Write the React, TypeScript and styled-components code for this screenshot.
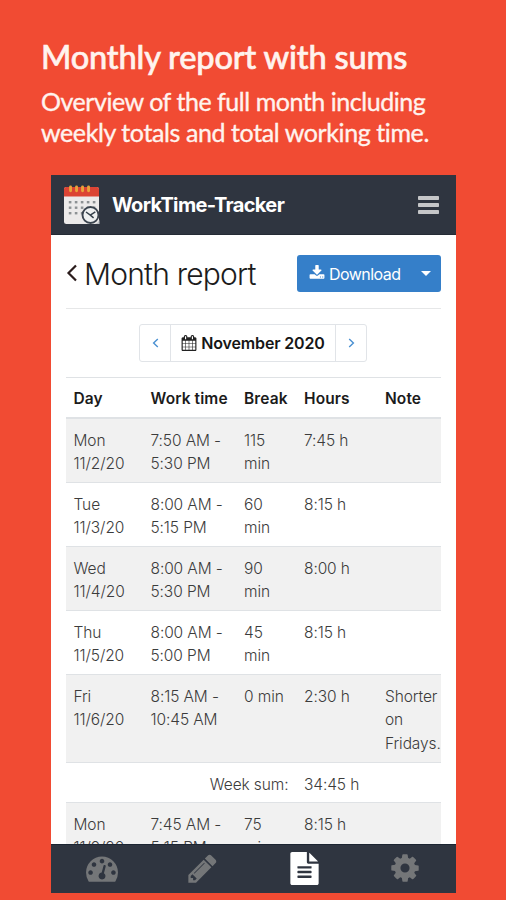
import React from "react";
import styled, { createGlobalStyle } from "styled-components";

const GlobalStyle = createGlobalStyle`
  *, *::before, *::after { box-sizing: border-box; }
  body { margin: 0; background: #f14b33; }
`;

const Page = styled.main`
  width: 506px;
  height: 900px;
  overflow: hidden;
  background: #f14b33;
  font-family: Inter, "Liberation Sans", sans-serif;
`;

const Intro = styled.header`
  height: 175px;
  padding: 37px 0 0 41px;
  color: #fff3ee;
  font-family: Lato, sans-serif;
  white-space: nowrap;
`;

const Headline = styled.h1`
  margin: 0;
  font-size: 32.6px;
  line-height: 40px;
  font-weight: 500;
  letter-spacing: -0.18px;
  -webkit-text-stroke: 0.6px currentColor;
`;

const Lead = styled.p<{ $spacing: string }>`
  margin: 0;
  font-size: 25px;
  line-height: 31px;
  letter-spacing: ${(p) => p.$spacing};
  -webkit-text-stroke: 0.35px currentColor;
`;

const LeadGroup = styled.div`
  padding-top: 9px;
`;

const Phone = styled.section`
  display: flex;
  flex-direction: column;
  width: 405px;
  height: 718px;
  margin-left: 51px;
  background: #fff;
`;

const AppBar = styled.div`
  display: flex;
  align-items: center;
  flex: 0 0 60px;
  padding: 0 17px 0 12px;
  background: #2f3540;
  border-bottom: 1px solid #252b35;
`;

const Brand = styled.strong`
  flex: 1;
  margin-left: 12px;
  color: #fff;
  font-size: 20px;
  font-weight: 700;
  letter-spacing: -0.64px;
`;

const Content = styled.div`
  flex: 1;
  min-height: 0;
  overflow: hidden;
  padding: 0 15px;
`;

const TitleRow = styled.div`
  display: flex;
  align-items: center;
  height: 74px;
  padding-top: 3px;
  border-bottom: 1px solid #e6e7e8;
`;

const Title = styled.h2`
  flex: 1;
  margin: 0 0 0 6px;
  padding-top: 2px;
  color: #1c1c1c;
  font-size: 30px;
  font-weight: 300;
  line-height: 36px;
  letter-spacing: -0.8px;
`;

const DownloadGroup = styled.div`
  display: flex;
  align-items: center;
  width: 144px;
  height: 37px;
  padding: 0 10px 0 12px;
  border-radius: 3px;
  background: #357fc9;
  color: #fff;
`;

const DownloadLabel = styled.span`
  flex: 1;
  margin-left: 4px;
  padding-top: 1px;
  font-size: 16px;
  letter-spacing: -0.55px;
`;

const MonthPicker = styled.div`
  display: flex;
  width: 228px;
  height: 38px;
  margin: 15px 0 15px 73px;
  border: 1px solid #e1e4e8;
  border-radius: 3px;
`;

const Step = styled.div`
  display: flex;
  align-items: center;
  justify-content: center;
  width: 30px;
`;

const Month = styled.div`
  display: flex;
  align-items: center;
  justify-content: center;
  flex: 1;
  gap: 4px;
  border: solid #e1e4e8;
  border-width: 0 1px;
  color: #161616;
  font-size: 16px;
  font-weight: 600;
  letter-spacing: -0.15px;
  white-space: nowrap;
`;

const Table = styled.table`
  width: 375px;
  table-layout: fixed;
  border-collapse: separate;
  border-spacing: 0;
  font-size: 15.5px;
  line-height: 23.7px;
`;

const Col = styled.col<{ $w: number }>`
  width: ${(p) => p.$w}px;
`;

const HeadCell = styled.th`
  height: 42px;
  padding: 3px 0 0 7.5px;
  border-top: 1px solid #dfe2e5;
  border-bottom: 2px solid #dfe2e5;
  color: #1b1b1b;
  text-align: left;
  font-weight: 600;
  letter-spacing: 0.1px;
  white-space: nowrap;
`;

const Row = styled.tr<{ $shaded?: boolean; $h: number }>`
  height: ${(p) => p.$h}px;
  background: ${(p) => (p.$shaded ? "#f1f1f1" : "#fff")};
`;

const Cell = styled.td<{ $right?: boolean }>`
  padding: 9.5px ${(p) => (p.$right ? 8 : 0)}px 0 7.5px;
  border-bottom: 1px solid #dfe2e5;
  color: #3c3c3c;
  font-weight: 300;
  letter-spacing: -0.1px;
  vertical-align: top;
  text-align: ${(p) => (p.$right ? "right" : "left")};
  white-space: pre-line;
`;

const TabBar = styled.nav`
  display: grid;
  grid-template-columns: repeat(4, 1fr);
  align-items: center;
  justify-items: center;
  flex: 0 0 49px;
  padding-bottom: 2px;
  background: #2f3540;
  border-top: 1px solid #1c2532;
`;

const Glyph = styled.svg<{ $color: string }>`
  display: block;
  flex: none;
  fill: ${(p) => p.$color};
`;

const Chevron = styled.svg<{ $color: string }>`
  display: block;
  flex: none;
  fill: none;
  stroke: ${(p) => p.$color};
`;

const paths = {
  gauge:
    "M384 1152q0-53-37.5-90.5t-90.5-37.5-90.5 37.5-37.5 90.5 37.5 90.5 90.5 37.5 90.5-37.5 37.5-90.5zm192-448q0-53-37.5-90.5t-90.5-37.5-90.5 37.5-37.5 90.5 37.5 90.5 90.5 37.5 90.5-37.5 37.5-90.5zm428 481l101-382q6-26-7.5-48.5t-38.5-29.5-48 6.5-30 39.5l-101 382q-60 5-107 43.5t-63 98.5q-20 77 20 146t117 89 146-20 89-117q16-60-6-117t-72-91zm660-33q0-53-37.5-90.5t-90.5-37.5-90.5 37.5-37.5 90.5 37.5 90.5 90.5 37.5 90.5-37.5 37.5-90.5zm-640-640q0-53-37.5-90.5t-90.5-37.5-90.5 37.5-37.5 90.5 37.5 90.5 90.5 37.5 90.5-37.5 37.5-90.5zm448 192q0-53-37.5-90.5t-90.5-37.5-90.5 37.5-37.5 90.5 37.5 90.5 90.5 37.5 90.5-37.5 37.5-90.5zm320 448q0 261-141 483-19 29-54 29h-1402q-35 0-54-29-141-221-141-483 0-182 71-348t191-286 286-191 348-71 348 71 286 191 191 286 71 348z",
  pencil:
    "M491 1536l91-91-235-235-91 91v107h128v128h107zm523-928q0-22-22-22-10 0-17 7l-542 542q-7 7-7 17 0 22 22 22 10 0 17-7l542-542q7-7 7-17zm-54-192l416 416-832 832h-416v-416zm683 96q0 53-37 90l-166 166-416-416 166-165q36-38 90-38 53 0 91 38l235 234q37 39 37 91z",
  file:
    "M1596 476q14 14 28 36h-472v-472q22 14 36 28zm-476 164h544v1056q0 40-28 68t-68 28h-1344q-40 0-68-28t-28-68v-1600q0-40 28-68t68-28h800v544q0 40 28 68t68 28zm160 736v-64q0-14-9-23t-23-9h-704q-14 0-23 9t-9 23v64q0 14 9 23t23 9h704q14 0 23-9t9-23zm0-256v-64q0-14-9-23t-23-9h-704q-14 0-23 9t-9 23v64q0 14 9 23t23 9h704q14 0 23-9t9-23zm0-256v-64q0-14-9-23t-23-9h-704q-14 0-23 9t-9 23v64q0 14 9 23t23 9h704q14 0 23-9t9-23z",
  cog:
    "M1152 896q0-106-75-181t-181-75-181 75-75 181 75 181 181 75 181-75 75-181zm512-109v222q0 12-8 23t-20 13l-185 28q-19 54-39 91 35 50 107 138 10 12 10 25t-9 23q-27 37-99 108t-94 71q-12 0-26-9l-138-108q-44 23-91 38-16 136-29 186-7 28-36 28h-222q-14 0-24.5-8.5t-11.5-21.5l-28-184q-49-16-90-37l-141 107q-10 9-25 9-14 0-25-11-126-114-165-168-7-10-7-23 0-12 8-23 15-21 51-66.5t54-70.5q-27-50-41-99l-183-27q-13-2-21-12.5t-8-23.5v-222q0-12 8-23t19-13l186-28q14-46 39-92-40-57-107-138-10-12-10-24 0-10 9-23 26-36 98.5-107.5t94.5-71.5q13 0 26 10l138 107q44-23 91-38 16-136 29-186 7-28 36-28h222q14 0 24.5 8.5t11.5 21.5l28 184q49 16 90 37l142-107q9-9 24-9 13 0 25 10 129 119 165 170 7 8 7 22 0 12-8 23-15 21-51 66.5t-54 70.5q26 50 41 98l183 28q13 2 21 12.5t8 23.5z",
  download:
    "M1344 1344q0-26-19-45t-45-19-45 19-19 45 19 45 45 19 45-19 19-45zm256 0q0-26-19-45t-45-19-45 19-19 45 19 45 45 19 45-19 19-45zm128-224v320q0 40-28 68t-68 28h-1472q-40 0-68-28t-28-68v-320q0-40 28-68t68-28h465l135 136q58 56 136 56t136-56l136-136h464q40 0 68 28t28 68zm-325-569q17 41-14 70l-448 448q-18 19-45 19t-45-19l-448-448q-31-29-14-70 17-39 59-39h256v-448q0-26 19-45t45-19h256q26 0 45 19t19 45v448h256q42 0 59 39z",
  calendar:
    "M192 1664h288v-288h-288v288zm352 0h320v-288h-320v288zm-352-352h288v-320h-288v320zm352 0h320v-320h-320v320zm-352-384h288v-288h-288v288zm736 736h320v-288h-320v288zm-384-736h320v-288h-320v288zm768 736h288v-288h-288v288zm-384-352h320v-320h-320v320zm-352-864v-288q0-13-9.5-22.5t-22.5-9.5h-64q-13 0-22.5 9.5t-9.5 22.5v288q0 13 9.5 22.5t22.5 9.5h64q13 0 22.5-9.5t9.5-22.5zm736 864h288v-320h-288v320zm-384-384h320v-288h-320v288zm384 0h288v-288h-288v288zm32-480v-288q0-13-9.5-22.5t-22.5-9.5h-64q-13 0-22.5 9.5t-9.5 22.5v288q0 13 9.5 22.5t22.5 9.5h64q13 0 22.5-9.5t9.5-22.5zm384-64v1280q0 52-38 90t-90 38h-1408q-52 0-90-38t-38-90v-1280q0-52 38-90t90-38h128v-96q0-66 47-113t113-47h64q66 0 113 47t47 113v96h384v-96q0-66 47-113t113-47h64q66 0 113 47t47 113v96h128q52 0 90 38t38 90z",
};

function Icon({ name, size, color }: { name: keyof typeof paths; size: number; color: string }) {
  return (
    <Glyph width={size} height={size} viewBox="0 0 1792 1792" $color={color} aria-hidden>
      <path d={paths[name]} />
    </Glyph>
  );
}

function Logo() {
  return (
    <Glyph width="37" height="40" viewBox="0 0 37 40" $color="#eceaea" aria-hidden>
      <rect x="1" y="2" width="35" height="37" rx="2.5" />
      <path d="M1 11.5V4q0-2 2-2h31q2 0 2 2v7.5z" fill="#dc4434" />
      {[7, 13, 19, 25].map((x) => (
        <rect key={x} x={x - 0.9} y="0.6" width="2.9" height="6.6" rx="1.4" fill="#e9a23a" />
      ))}
      {[17, 22.5, 28].map((y) =>
        [6, 12, 18, 24, 30].map((x) => (
          <rect key={`${x}-${y}`} x={x - 0.2} y={y - 1} width="2.6" height="2.4" fill="#8d9194" />
        ))
      )}
      <circle cx="27.5" cy="30" r="8" fill="#eef0f1" stroke="#3b444f" strokeWidth="1.9" />
      <path
        d="M23 27l4.3 3.2 5-3.4M27.3 30.2l3.3 2.7"
        fill="none"
        stroke="#35404b"
        strokeWidth="1.5"
      />
      <path d="M36.5 35v4h-4.5q3-1 4.5-4z" fill="#bfc3c7" />
    </Glyph>
  );
}

const columns = [77, 93.5, 60, 81, 63.5];

const entries = [
  { h: 64, cells: ["Mon\n11/2/20", "7:50 AM -\n5:30 PM", "115\nmin", "7:45 h", ""] },
  { h: 64, cells: ["Tue\n11/3/20", "8:00 AM -\n5:15 PM", "60\nmin", "8:15 h", ""] },
  { h: 64, cells: ["Wed\n11/4/20", "8:00 AM -\n5:30 PM", "90\nmin", "8:00 h", ""] },
  { h: 64, cells: ["Thu\n11/5/20", "8:00 AM -\n5:00 PM", "45\nmin", "8:15 h", ""] },
  { h: 88, cells: ["Fri\n11/6/20", "8:15 AM -\n10:45 AM", "0 min", "2:30 h", "Shorter\non\nFridays."] },
];

const nextWeek = ["Mon\n11/9/20", "7:45 AM -\n5:15 PM", "75\nmin", "8:15 h", ""];

export default function App() {
  return (
    <>
      <GlobalStyle />
      <Page>
        <Intro>
          <Headline>Monthly report with sums</Headline>
          <LeadGroup>
            <Lead $spacing="-0.46px">Overview of the full month including</Lead>
            <Lead $spacing="-0.4px">weekly totals and total working time.</Lead>
          </LeadGroup>
        </Intro>
        <Phone>
          <AppBar>
            <Logo />
            <Brand>WorkTime-Tracker</Brand>
            <Glyph width="21" height="18" viewBox="0 0 21 18" $color="#c5c6c8" aria-hidden>
              <rect width="21" height="4" rx="0.8" />
              <rect y="7" width="21" height="4" rx="0.8" />
              <rect y="14" width="21" height="4" rx="0.8" />
            </Glyph>
          </AppBar>
          <Content>
            <TitleRow>
              <Chevron width="12" height="18" viewBox="0 0 12 18" $color="#2b1c1c" strokeWidth="2.2" aria-hidden>
                <path d="M10 1.5L2.5 9l7.5 7.5" />
              </Chevron>
              <Title>Month report</Title>
              <DownloadGroup>
                <Icon name="download" size={16} color="#fff" />
                <DownloadLabel>Download</DownloadLabel>
                <Glyph width="10" height="5" viewBox="0 0 10 5" $color="#fff" aria-hidden>
                  <path d="M0 0h10L5 5z" />
                </Glyph>
              </DownloadGroup>
            </TitleRow>
            <MonthPicker>
              <Step>
                <Chevron width="7" height="10" viewBox="0 0 7 10" $color="#4a90d2" strokeWidth="1.4" aria-hidden>
                  <path d="M5.8 1L1.6 5l4.2 4" />
                </Chevron>
              </Step>
              <Month>
                <Icon name="calendar" size={16} color="#222" />
                <span>November 2020</span>
              </Month>
              <Step>
                <Chevron width="7" height="10" viewBox="0 0 7 10" $color="#4a90d2" strokeWidth="1.4" aria-hidden>
                  <path d="M1.2 1l4.2 4-4.2 4" />
                </Chevron>
              </Step>
            </MonthPicker>
            <Table>
              <colgroup>
                {columns.map((w, i) => (
                  <Col key={i} $w={w} />
                ))}
              </colgroup>
              <thead>
                <tr>
                  {["Day", "Work time", "Break", "Hours", "Note"].map((t) => (
                    <HeadCell key={t}>{t}</HeadCell>
                  ))}
                </tr>
              </thead>
              <tbody>
                {entries.map((e, i) => (
                  <Row key={i} $h={e.h} $shaded={i % 2 === 0}>
                    {e.cells.map((c, j) => (
                      <Cell key={j}>{c}</Cell>
                    ))}
                  </Row>
                ))}
                <Row $h={40}>
                  <Cell colSpan={3} $right>
                    Week sum:
                  </Cell>
                  <Cell>34:45 h</Cell>
                  <Cell />
                </Row>
                <Row $h={64} $shaded>
                  {nextWeek.map((c, j) => (
                    <Cell key={j}>{c}</Cell>
                  ))}
                </Row>
              </tbody>
            </Table>
          </Content>
          <TabBar>
            <Icon name="gauge" size={32} color="#747678" />
            <Icon name="pencil" size={33} color="#747678" />
            <Icon name="file" size={33} color="#fff" />
            <Icon name="cog" size={32} color="#747678" />
          </TabBar>
        </Phone>
      </Page>
    </>
  );
}
